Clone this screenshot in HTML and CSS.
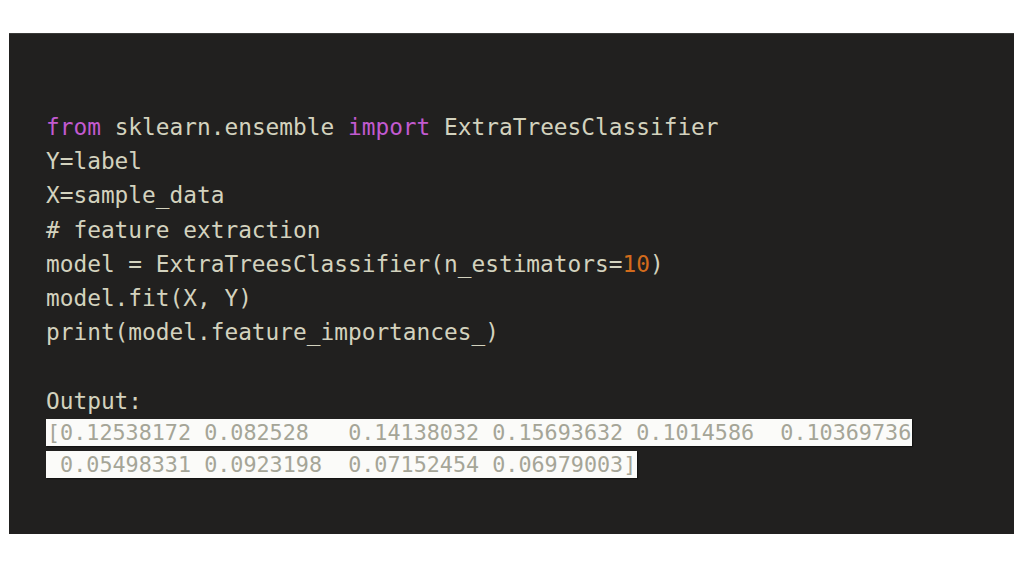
FILE: index.html
```html
<!DOCTYPE html>
<html>
<head>
<meta charset="utf-8">
<link rel="stylesheet" href="styles.css">
</head>
<body>
<div class="panel">
  <div class="code">
    <div class="line"><span class="kw">from</span> sklearn.ensemble <span class="kw">import</span> ExtraTreesClassifier</div>
    <div class="line">Y=label</div>
    <div class="line">X=sample_data</div>
    <div class="line"># feature extraction</div>
    <div class="line">model = ExtraTreesClassifier(n_estimators=<span class="num">10</span>)</div>
    <div class="line">model.fit(X, Y)</div>
    <div class="line">print(model.feature_importances_)</div>
    <div class="line">&nbsp;</div>
    <div class="line">Output:</div>
  </div>
  <div class="output">
    <div class="out-line"><span class="hl">[0.12538172 0.082528   0.14138032 0.15693632 0.1014586  0.10369736</span></div>
    <div class="out-line"><span class="hl"> 0.05498331 0.0923198  0.07152454 0.06979003]</span></div>
  </div>
</div>
</body>
</html>
```
FILE: styles.css
```css
html, body {
  margin: 0;
  padding: 0;
  background: #ffffff;
}
body {
  width: 1024px;
  height: 567px;
  overflow: hidden;
}
.panel {
  box-sizing: border-box;
  margin: 33px 0 0 9px;
  width: 1005px;
  height: 501px;
  background: #21201f;
  padding: 76px 0 0 37px;
  border-top: 1px solid #3a3a38;
}
.code {
  font-family: "DejaVu Sans Mono", "Liberation Mono", monospace;
  font-size: 22.8px;
  line-height: 34.2px;
  color: #d3d2be;
}
.line {
  white-space: pre;
  height: 34.2px;
}
.kw {
  color: #c25ad0;
}
.num {
  color: #d26b1c;
}
.output {
  margin-top: 1px;
  display: flex;
  flex-direction: column;
  gap: 5px;
  align-items: flex-start;
}
.out-line {
  height: 27px;
}
.hl {
  display: inline-block;
  background: #fbfbf9;
  color: #a5a597;
  font-family: "DejaVu Sans Mono", "Liberation Mono", monospace;
  font-size: 21.75px;
  line-height: 27px;
  height: 27px;
  white-space: pre;
  padding: 0 1px;
  box-shadow: 1px 1px 1px rgba(0,0,0,0.4);
}
```
